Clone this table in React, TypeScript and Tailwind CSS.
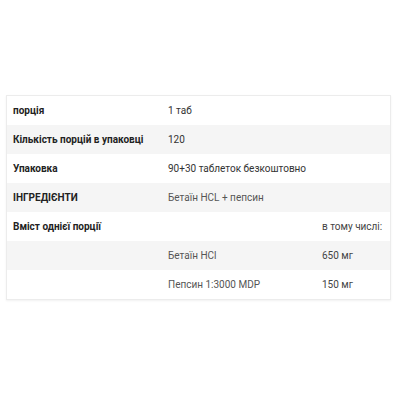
const ROWS: { label?: string; value?: string; extra?: string; muted?: boolean }[] = [
  { label: "порція", value: "1 таб" },
  { label: "Кількість порцій в упаковці", value: "120" },
  { label: "Упаковка", value: "90+30 таблеток безкоштовно" },
  { label: "ІНГРЕДІЄНТИ", value: "Бетаїн HCL + пепсин", muted: true },
  { label: "Вміст однієї порції", extra: "в тому числі:" },
  { value: "Бетаїн HCl", extra: "650 мг", muted: true },
  { value: "Пепсин 1:3000 MDP", extra: "150 мг", muted: true },
];

export default function App() {
  return (
    <div className="h-[400px] w-[400px] bg-white pt-[95px] pl-[6px] font-['Roboto',sans-serif]">
      <div className="w-[385px] border border-[#ececec] shadow-[0_1px_2px_rgba(0,0,0,0.06)]">
        {ROWS.map((r, i) => (
          <div
            key={i}
            className={`grid h-[29px] grid-cols-[154px_155px_1fr] items-center text-[10px] ${i % 2 === 1 ? "bg-[#f5f5f5]" : "bg-white"}`}
          >
            <span className="pl-[6px] font-bold text-[#222]">{r.label}</span>
            <span className={`whitespace-nowrap pl-[7px] ${r.muted ? "text-[#555]" : "text-[#333]"}`}>{r.value}</span>
            <span className="whitespace-nowrap pl-[6px] text-[#444]">{r.extra}</span>
          </div>
        ))}
      </div>
    </div>
  );
}
